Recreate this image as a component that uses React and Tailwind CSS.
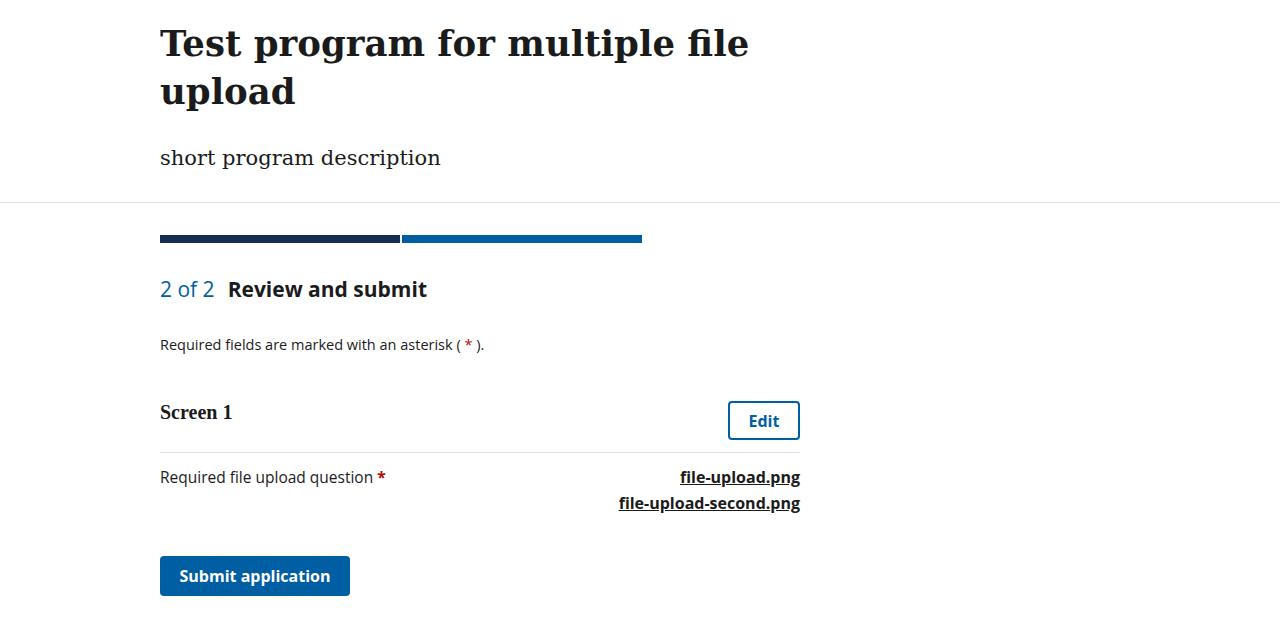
export default function App() {
  const sans = { fontFamily: '"Open Sans", "Noto Sans", sans-serif' };
  return (
    <div className="min-h-screen bg-white text-[#1b1b1b]" style={sans}>
      <header className="border-b border-[#dfe1e2]">
        <div className="mx-auto w-[960px] pl-0">
          <div className="pt-[20px] pb-[28px]">
            <h1
              className="text-[35.5px] leading-[48px] font-bold text-[#1b1b1b] w-[620px]"
              style={{ fontFamily: '"DejaVu Serif", serif' }}
            >
              Test program for multiple file upload
            </h1>
            <p
              className="mt-[26px] text-[21px] leading-[32px]"
              style={{ fontFamily: '"DejaVu Serif", serif' }}
            >
              short program description
            </p>
          </div>
        </div>
      </header>
      <main className="mx-auto w-[960px]">
        <div className="w-[640px]">
          <div className="mt-[32px] flex gap-[2px] w-[482px]">
            <div className="h-[8px] flex-1 bg-[#162e51]" />
            <div className="h-[8px] flex-1 bg-[#005ea2]" />
          </div>
          <div className="mt-[31px] flex items-baseline gap-[13px]">
            <span className="text-[21px] text-[#005ea2]">2 of 2</span>
            <span className="text-[21px] font-bold">Review and submit</span>
          </div>
          <p className="mt-[28px] text-[14.5px]">
            Required fields are marked with an asterisk ( <span className="text-[#b50909]">*</span> ).
          </p>
          <div className="mt-[46px] flex items-start justify-between border-b border-[#dfe1e2] pb-[12px]">
            <h2
              className="text-[20px] font-bold mt-[-4px]"
              style={{ fontFamily: '"Liberation Serif", serif' }}
            >
              Screen 1
            </h2>
            <button className="h-[39px] w-[72px] rounded-[4px] border-2 border-[#005ea2] text-[#005ea2] font-bold text-[16px]">
              Edit
            </button>
          </div>
          <div className="mt-[11px] flex justify-between leading-[26px]">
            <div className="text-[15.5px]">
              Required file upload question <span className="text-[#b50909] font-bold">*</span>
            </div>
            <div className="flex flex-col items-end font-bold text-[16px]">
              <a className="underline">file-upload.png</a>
              <a className="underline">file-upload-second.png</a>
            </div>
          </div>
          <button className="mt-[40px] h-[40px] w-[190px] rounded-[4px] bg-[#005ea2] text-white font-bold text-[16px]">
            Submit application
          </button>
        </div>
      </main>
    </div>
  );
}
